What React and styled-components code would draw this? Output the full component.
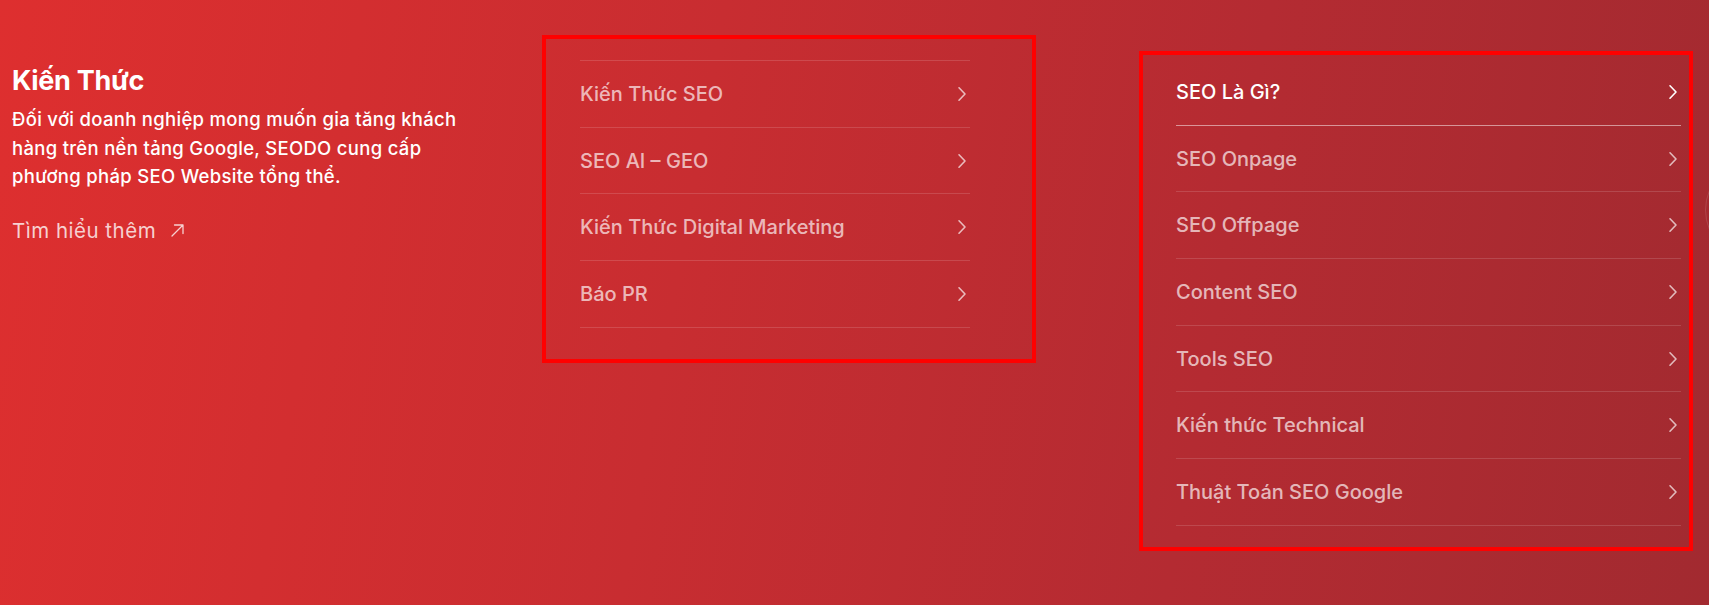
import React from "react";
import styled, { createGlobalStyle } from "styled-components";

const GlobalStyle = createGlobalStyle`
  html, body {
    margin: 0;
    padding: 0;
  }
  body {
    font-family: Inter, "Noto Sans", sans-serif;
    -webkit-font-smoothing: antialiased;
  }
  * {
    box-sizing: border-box;
  }
`;

const knowledge = ["Kiến Thức SEO", "SEO AI – GEO", "Kiến Thức Digital Marketing", "Báo PR"];

const seoTopics = [
  "SEO Là Gì?",
  "SEO Onpage",
  "SEO Offpage",
  "Content SEO",
  "Tools SEO",
  "Kiến thức Technical",
  "Thuật Toán SEO Google",
];

const Chevron = ({ color }) => (
  <svg width="10" height="16" viewBox="0 0 10 16" fill="none">
    <polyline
      points="2,1.8 8,8 2,14.2"
      stroke={color}
      strokeWidth="1.6"
      strokeLinecap="round"
      strokeLinejoin="round"
    />
  </svg>
);

// thin diagonal arrow next to "Tìm hiểu thêm"
const ArrowOut = () => (
  <svg width="15" height="15" viewBox="0 0 15 15" fill="none">
    <path
      d="M2 13 L13 2 M4.5 2 H13 V10.5"
      stroke="currentColor"
      strokeWidth="1.3"
      strokeLinecap="round"
      strokeLinejoin="round"
    />
  </svg>
);

export default function App() {
  return (
    <>
      <GlobalStyle />
      <MegaMenu>
        <Intro>
          <Title>Kiến Thức</Title>
          <Description>
            Đối với doanh nghiệp mong muốn gia tăng khách hàng trên nền tảng Google, SEODO cung cấp
            phương pháp SEO Website tổng thể.
          </Description>
          <MoreLink>
            Tìm hiểu thêm
            <ArrowOut />
          </MoreLink>
        </Intro>

        <MiddleBox>
          <LinkList $topLine>
            {knowledge.map((label) => (
              <LinkRow key={label}>
                <span>{label}</span>
                <Chevron color="rgba(255,255,255,0.68)" />
              </LinkRow>
            ))}
          </LinkList>
        </MiddleBox>

        <RightBox>
          <LinkList>
            {seoTopics.map((label, i) => (
              <LinkRow key={label} $active={i === 0}>
                <span>{label}</span>
                <Chevron color={i === 0 ? "#ffffff" : "rgba(255,255,255,0.68)"} />
              </LinkRow>
            ))}
          </LinkList>
        </RightBox>

        <EdgeCircle />
      </MegaMenu>
    </>
  );
}

const MegaMenu = styled.section`
  position: relative;
  overflow: hidden;
  display: flex;
  align-items: flex-start;
  width: 100%;
  height: 605px;
  padding-left: 12px;
  background: linear-gradient(100deg, #de2f2f 0%, #c82d31 40%, #b42b32 70%, #a22a30 100%);
  color: #fff;
`;

const Intro = styled.div`
  width: 460px;
  margin-top: 63px;
`;

const Title = styled.h2`
  margin: 0 0 6px;
  font-size: 27px;
  line-height: 36px;
  font-weight: 700;
  letter-spacing: -0.3px;
`;

const Description = styled.p`
  margin: 0;
  font-size: 18.5px;
  line-height: 28.5px;
  font-weight: 500;
  letter-spacing: 0.3px;
`;

const MoreLink = styled.a`
  display: inline-flex;
  align-items: center;
  gap: 14px;
  margin-top: 26px;
  font-size: 20.5px;
  line-height: 28px;
  letter-spacing: 0.5px;
  color: rgba(255, 255, 255, 0.78);
  cursor: pointer;
`;

const Box = styled.div`
  border: 4px solid #ff0000;
`;

const MiddleBox = styled(Box)`
  width: 494px;
  margin-left: 70px;
  margin-top: 35px;
  padding: 21px 62px 31px 34px;
`;

const RightBox = styled(Box)`
  width: 554px;
  margin-left: 103px;
  margin-top: 51px;
  padding: 4px 8px 21px 33px;
`;

const LinkList = styled.ul`
  list-style: none;
  margin: 0;
  padding: 0;
  border-top: ${(p) => (p.$topLine ? "1px solid rgba(255,255,255,0.14)" : "none")};
`;

const LinkRow = styled.li`
  display: flex;
  align-items: center;
  justify-content: space-between;
  height: 66.7px;
  padding-right: 3px;
  border-bottom: 1px solid
    ${(p) => (p.$active ? "rgba(255,255,255,0.5)" : "rgba(255,255,255,0.14)")};
  font-size: 20px;
  font-weight: 500;
  color: ${(p) => (p.$active ? "#ffffff" : "rgba(255,255,255,0.68)")};
  cursor: pointer;
`;

const EdgeCircle = styled.div`
  position: absolute;
  left: 1705px;
  top: 160px;
  width: 100px;
  height: 100px;
  border-radius: 50%;
  border: 1px solid rgba(255, 255, 255, 0.12);
`;
